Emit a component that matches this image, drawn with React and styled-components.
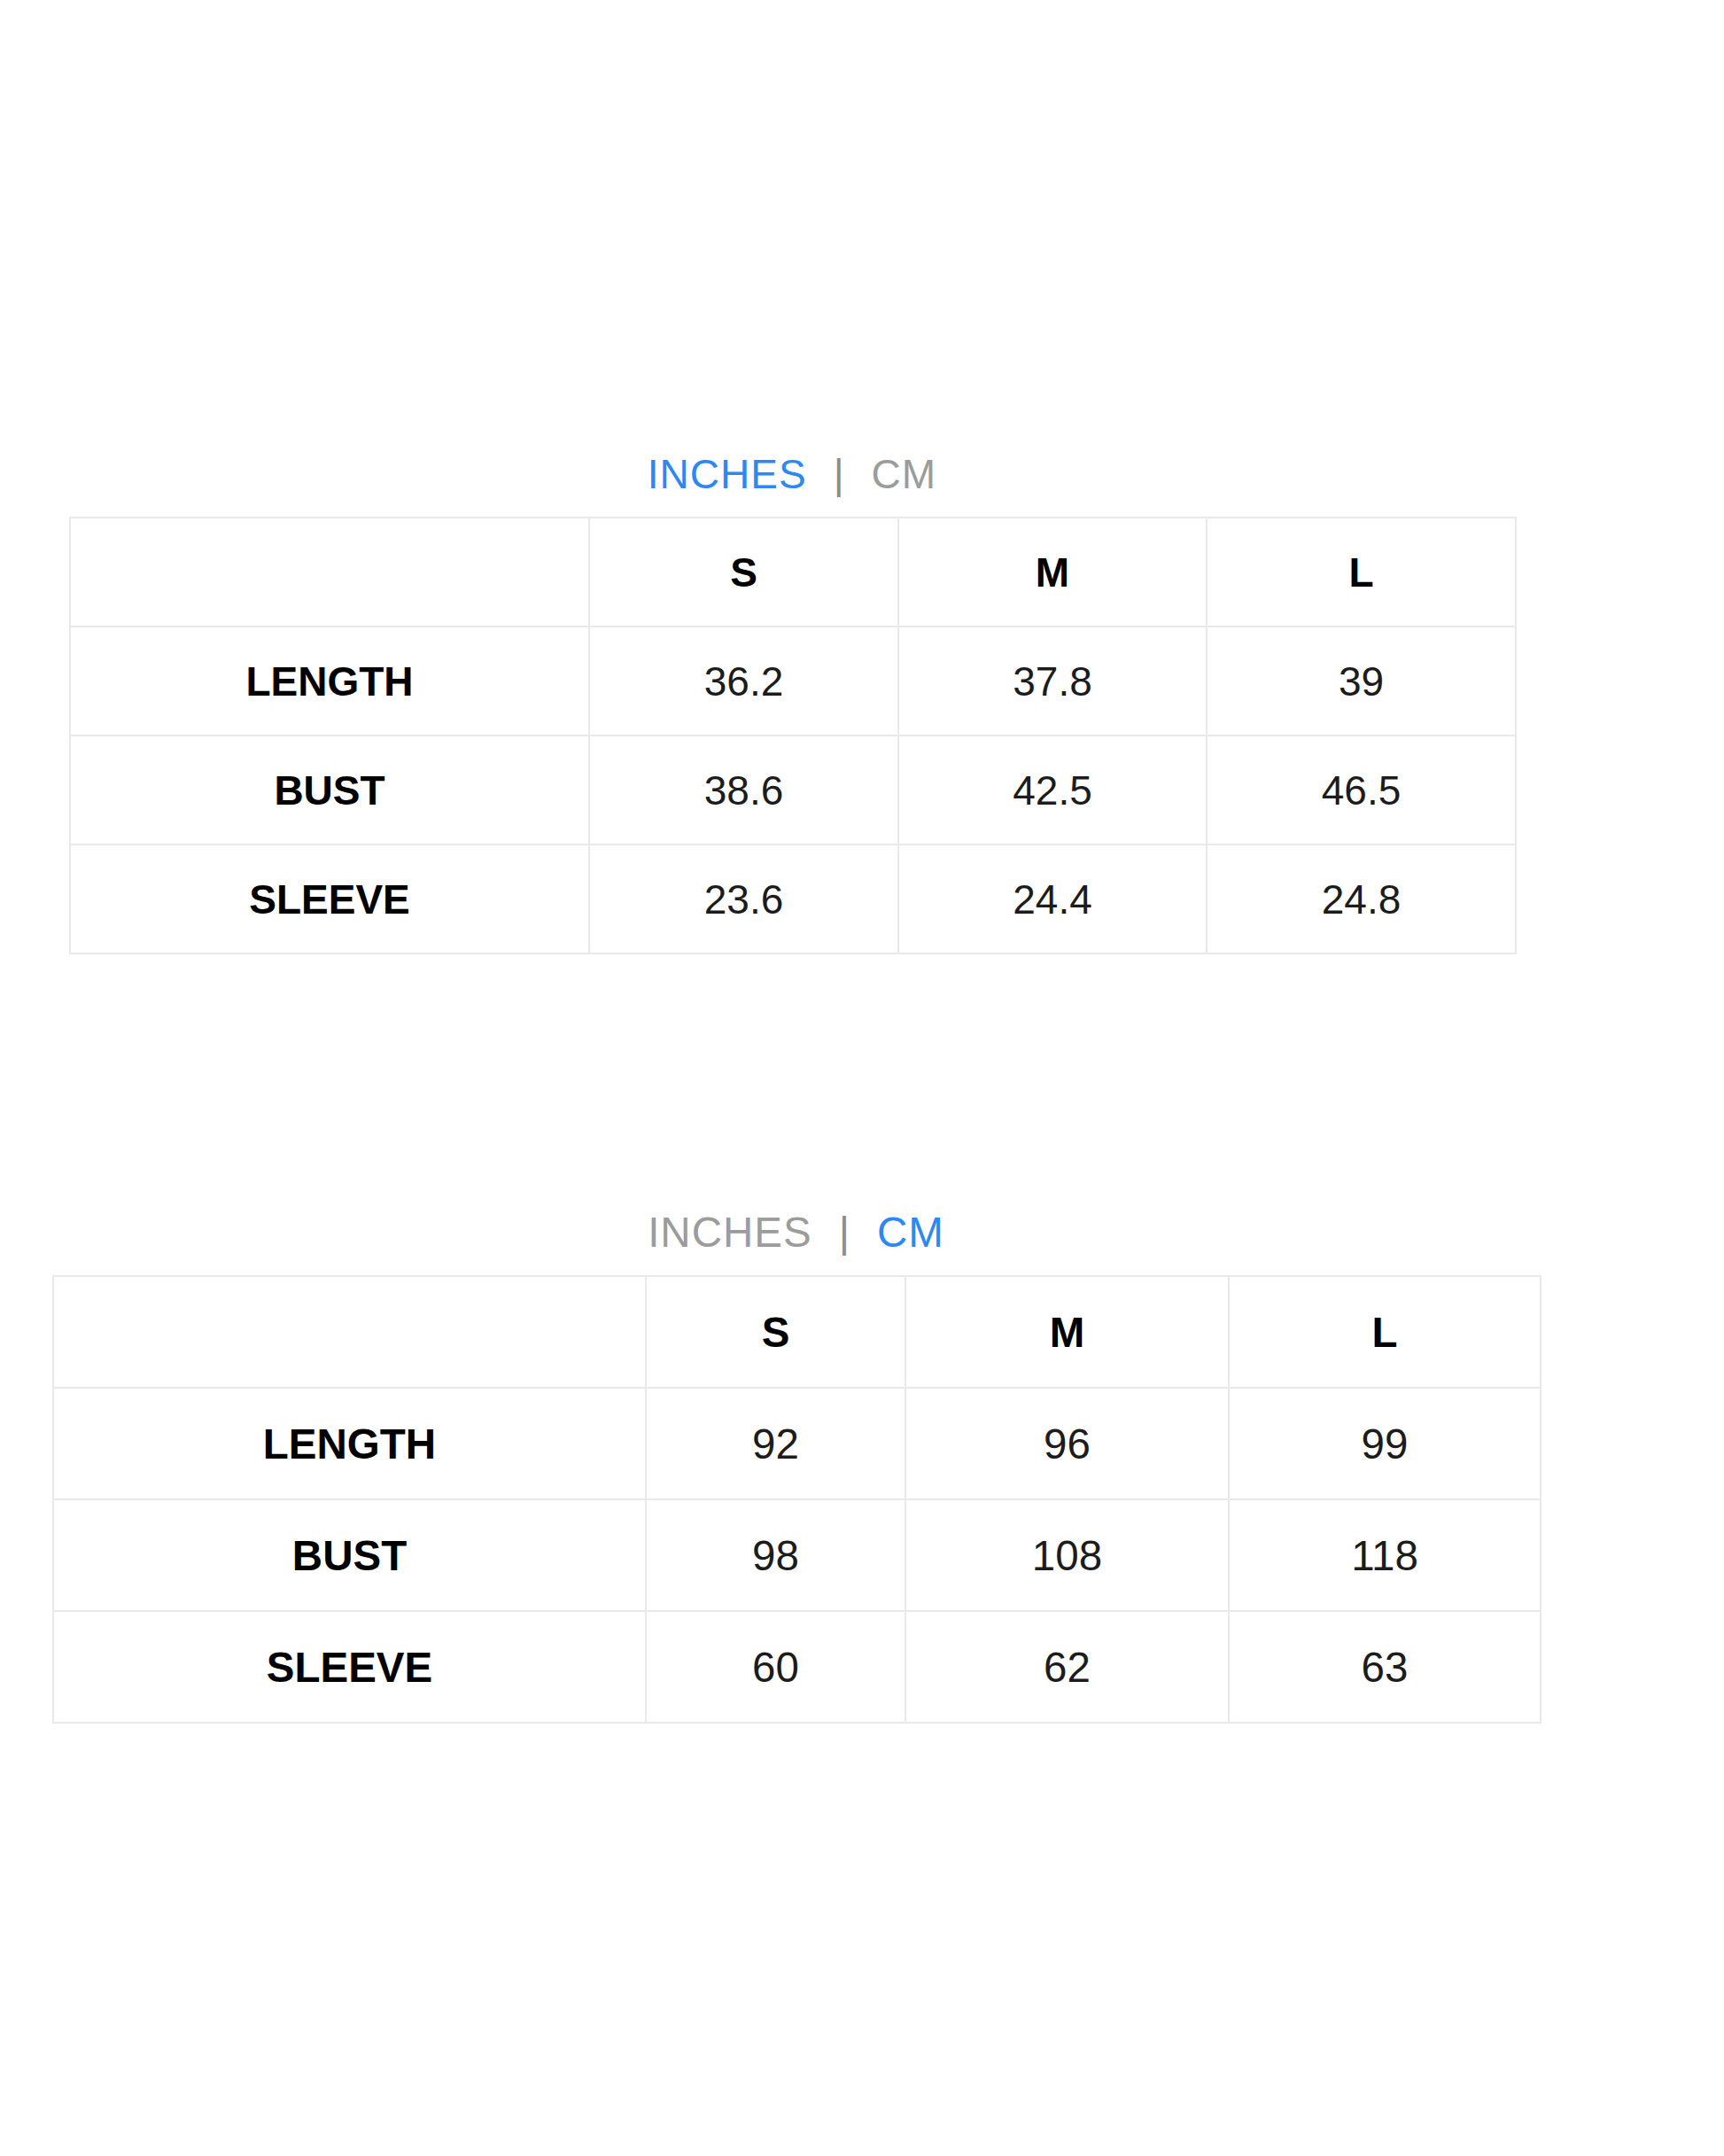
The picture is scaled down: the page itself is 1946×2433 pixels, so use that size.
import React from "react";
import styled, { createGlobalStyle } from "styled-components";

const GlobalStyle = createGlobalStyle`
  html, body {
    margin: 0;
    padding: 0;
    background: #ffffff;
  }
  body {
    font-family: "Liberation Sans", Arial, sans-serif;
  }
`;

const Page = styled.div`
  min-height: 2433px;
  padding-top: 508px;
  box-sizing: border-box;
  display: flex;
  flex-direction: column;
  gap: 286px;
`;

const ChartBlock = styled.section`
  width: ${(props) => props.width}px;
  margin-left: ${(props) => props.left}px;
  font-size: ${(props) => props.fontSize}px;
`;

const UnitSwitch = styled.div`
  text-align: center;
  font-size: 1em;
  line-height: normal;
  letter-spacing: 1px;
  margin-bottom: 21px;
`;

const Unit = styled.span`
  color: ${(props) => (props.active ? "#2d88f4" : "#9c9c9c")};
`;

const Separator = styled.span`
  color: #8c8c8c;
  margin: 0 30px;
`;

const SizeTable = styled.table`
  width: 100%;
  border-collapse: collapse;
  table-layout: fixed;
  border: 2px solid #e9e9ec;
`;

const Cell = styled.td`
  height: ${(props) => props.rowHeight}px;
  padding: 0;
  border: 2px solid #e9e9ec;
  text-align: center;
  vertical-align: middle;
  font-size: 1em;
  line-height: normal;
  font-weight: ${(props) => (props.bold ? 700 : 400)};
  color: ${(props) => (props.bold ? "#000000" : "#1c1c1c")};
`;

const sizes = ["S", "M", "L"];

const SizeChart = ({ unit, rows, columns, left, width, fontSize, rowHeight }) => (
  <ChartBlock left={left} width={width} fontSize={fontSize}>
    <UnitSwitch>
      <Unit active={unit === "in"}>INCHES</Unit>
      <Separator>|</Separator>
      <Unit active={unit === "cm"}>CM</Unit>
    </UnitSwitch>
    <SizeTable>
      <colgroup>
        {columns.map((w, i) => (
          <col key={i} style={{ width: w }} />
        ))}
      </colgroup>
      <tbody>
        <tr>
          <Cell rowHeight={rowHeight} />
          {sizes.map((s) => (
            <Cell key={s} bold rowHeight={rowHeight}>
              {s}
            </Cell>
          ))}
        </tr>
        {rows.map((row) => (
          <tr key={row.label}>
            <Cell bold rowHeight={rowHeight}>
              {row.label}
            </Cell>
            {row.values.map((v, i) => (
              <Cell key={i} rowHeight={rowHeight}>
                {v}
              </Cell>
            ))}
          </tr>
        ))}
      </tbody>
    </SizeTable>
  </ChartBlock>
);

const inchRows = [
  { label: "LENGTH", values: ["36.2", "37.8", "39"] },
  { label: "BUST", values: ["38.6", "42.5", "46.5"] },
  { label: "SLEEVE", values: ["23.6", "24.4", "24.8"] },
];

const cmRows = [
  { label: "LENGTH", values: ["92", "96", "99"] },
  { label: "BUST", values: ["98", "108", "118"] },
  { label: "SLEEVE", values: ["60", "62", "63"] },
];

const App = () => (
  <>
    <GlobalStyle />
    <Page>
      <SizeChart
        unit="in"
        rows={inchRows}
        columns={[586, 349, 348, 349]}
        left={78}
        width={1632}
        fontSize={46}
        rowHeight={121}
      />
      <SizeChart
        unit="cm"
        rows={cmRows}
        columns={[669, 293, 365, 352]}
        left={59}
        width={1679}
        fontSize={47.5}
        rowHeight={124}
      />
    </Page>
  </>
);

export default App;
